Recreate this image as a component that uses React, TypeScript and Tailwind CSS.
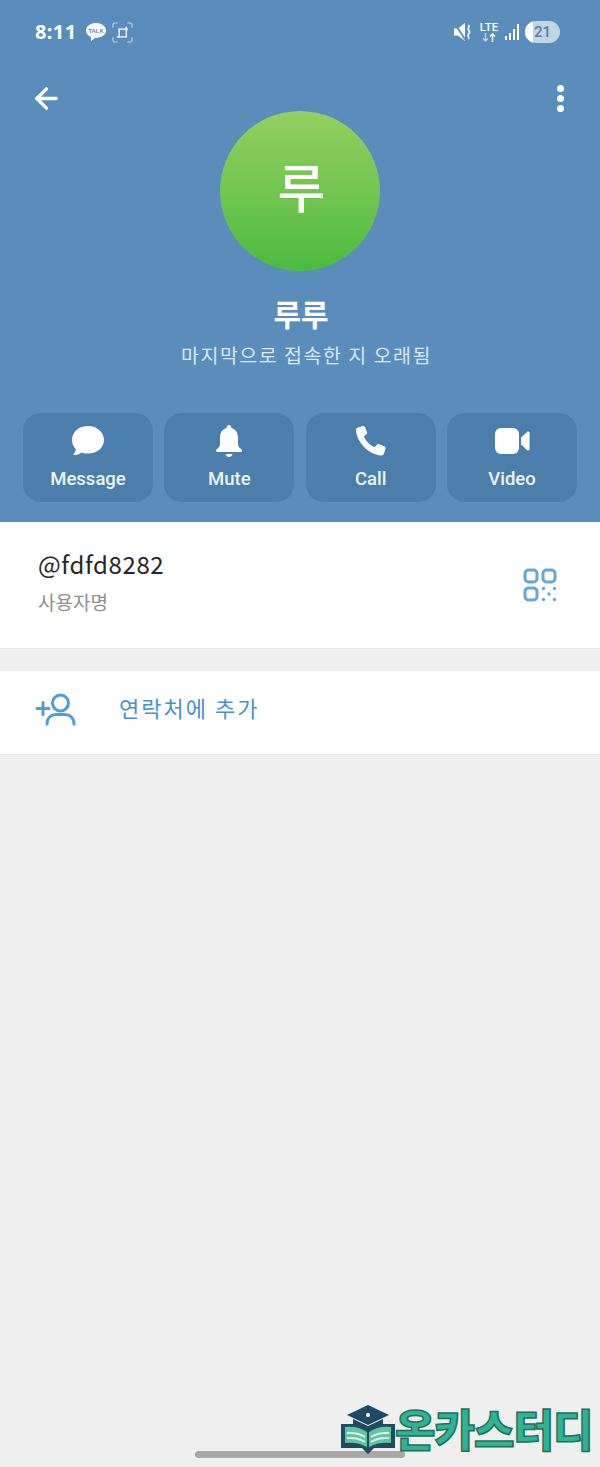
import { ArrowLeft } from 'lucide-react';
import type { ReactNode } from 'react';

const korean = 'font-["Noto_Sans_CJK_KR","Noto_Sans",sans-serif]';

function ActionButton({ label, icon }: { label: string; icon: ReactNode }) {
  return (
    <div className="w-[130px] h-[89px] rounded-[18px] bg-[#4b7eab] flex flex-col items-center pt-[10px]">
      <div className="w-9 h-9 flex items-center justify-center">{icon}</div>
      <span className='mt-[9px] text-[18.500px] leading-[22px] font-medium text-[#eef3f8] font-["Roboto",sans-serif]'>{label}</span>
    </div>
  );
}

function StatusBar() {
  return (
    <div className="h-[85px] pt-[20px] pl-[35px] pr-[40px] flex items-start justify-between text-white">
      <div className="flex items-center h-[24px]">
        <span className='w-[41px] text-[20px] leading-[24px] font-bold tracking-[0.4px] whitespace-nowrap font-["Noto_Sans",sans-serif]'>8:11</span>
        <svg width="22" height="20" viewBox="0 0 22 20" className="ml-[9px]">
          <path d="M11 1C5.500 1 1 4.300 1 8.500c0 2.800 2 5.100 4.800 6.400L6 19l4-3.100h1c5.500 0 10-3.300 10-7.400S16.500 1 11 1z" fill="#fff" />
          <text x="11" y="11" textAnchor="middle" fontSize="6" fontWeight="700" fill="#5a8dbb" fontFamily="Liberation Sans">TALK</text>
        </svg>
        <svg width="21" height="21" viewBox="0 0 22 22" fill="none" stroke="#fff" className="ml-[5px]">
          <path d="M1 6V3a2 2 0 0 1 2-2h3M16 1h3a2 2 0 0 1 2 2v3M21 16v3a2 2 0 0 1-2 2h-3M6 21H3a2 2 0 0 1-2-2v-3" strokeOpacity=".6" strokeWidth="1.200" />
          <path d="M6.500 7.500h10M15 5v10.500M7.500 7v9.500M5 15.500h10.500" strokeWidth="1.400" />
        </svg>
      </div>
      <div className="flex items-center h-[24px]">
        <svg width="18" height="20" viewBox="0 0 18 20" fill="#fff">
          <path d="M0 6.500h4l7-5.500v18l-7-5.500H0z" />
          <path d="M0.500 1 11.500 18" stroke="#5a8dbb" strokeWidth="1.800" />
          <path d="M14.500 3c2 2-1.500 3 0 5s2 2 0 4 1.500 3 0 5" stroke="#fff" strokeWidth="1.600" fill="none" />
        </svg>
        <div className='ml-[8px] w-[18px] flex flex-col items-center leading-none font-["Roboto",sans-serif]'>
          <span className="text-[11.500px] leading-[11px] font-medium">LTE</span>
          <svg width="14" height="9" viewBox="0 0 14 9" fill="none" strokeWidth="1.400">
            <path d="M3.500 0v8M1 5.500 3.500 8 6 5.500" stroke="#c3d4e5" />
            <path d="M10.500 9V1M8 3.500 10.500 1 13 3.500" stroke="#fff" />
          </svg>
        </div>
        <div className="ml-[7px] h-[16px] flex items-end gap-[2px]">
          <div className="w-[2px] h-[4px] bg-white" />
          <div className="w-[2px] h-[7px] bg-white" />
          <div className="w-[2px] h-[11px] bg-white" />
          <div className="w-[2px] h-[16px] bg-white" />
        </div>
        <div className="ml-[6px] w-[35px] h-[22px] rounded-full bg-[#c3d4e5] flex items-center overflow-hidden relative">
          <div className="w-[8px] h-full bg-white" />
          <span className='absolute inset-0 text-center text-[15px] leading-[22px] font-medium text-[#4f7fae] font-["Roboto",sans-serif]'>21</span>
        </div>
      </div>
    </div>
  );
}

export default function App() {
  return (
    <div className="relative w-[600px] h-[1467px] overflow-hidden bg-[#efefef]">
      {/* Profile header */}
      <div className="h-[522px] bg-[#5a8dbb]">
        <StatusBar />
        <div className="h-[26px] pl-[30px] pr-[36px] flex items-center justify-between text-white">
          <ArrowLeft size={33} strokeWidth={2.400} />
          <div className="flex flex-col gap-[3px]">
            <div className="w-[7px] h-[7px] rounded-full bg-white" />
            <div className="w-[7px] h-[7px] rounded-full bg-white" />
            <div className="w-[7px] h-[7px] rounded-full bg-white" />
          </div>
        </div>
        <div className="flex flex-col items-center">
          <div className="w-[160px] h-[160px] rounded-full bg-gradient-to-b from-[#93d060] to-[#4bbb40] flex items-center justify-center">
            <span className={`${korean} text-[52px] leading-none font-medium text-white -mt-[10px] ml-[3px]`}>루</span>
          </div>
          <div className={`${korean} mt-[23px] ml-[2px] text-[30px] leading-[38px] font-bold text-white`}>루루</div>
          <div className={`${korean} mt-[9px] ml-[13px] text-[19.500px] leading-[28px] tracking-[1.500px] text-[#d9e8f5]`}>마지막으로 접속한 지 오래됨</div>
        </div>
        <div className="mt-[44px] px-[23px] flex justify-between">
          <ActionButton
            label="Message"
            icon={
              <svg width="34" height="32" viewBox="0 0 34 32" fill="#fff">
                <path d="M17 1C8 1 1 7 1 15c0 3.600 1.400 6.800 3.800 9.200-.3 2.200-1.300 4-2.800 5.800 3.200.2 6.400-.9 8.600-2.600 2 .8 4.200 1.200 6.400 1.200 9 0 16-6 16-13.600S26 1 17 1z" />
              </svg>
            }
          />
          <ActionButton
            label="Mute"
            icon={
              <svg width="30" height="34" viewBox="0 0 30 34" fill="#fff">
                <path d="M15 1c-1.300 0-2.300 1-2.300 2.300v.8C8 5.300 6 9.200 6 14v6c0 2.500-1.500 4-3.500 5.500C1.500 26.300 2 28 3.400 28h23.200c1.400 0 1.900-1.700.9-2.500C25.500 24 24 22.500 24 20v-6c0-4.800-2-8.700-6.700-9.900v-.8C17.300 2 16.300 1 15 1z" />
                <path d="M11.500 30h7c-.5 1.800-1.900 3-3.500 3s-3-1.200-3.500-3z" />
              </svg>
            }
          />
          <ActionButton
            label="Call"
            icon={
              <svg width="32" height="32" viewBox="0 0 32 32" fill="#fff">
                <path d="M3 2.500 7.500 1c1-.3 2 .1 2.400 1.100l2 5c.3.8.1 1.600-.5 2.200L9 11.500c1.700 4.500 5.800 8.600 10.500 10.700l2.300-2.500c.6-.6 1.400-.8 2.200-.5l5.300 2c1 .4 1.500 1.400 1.200 2.400l-1.500 5c-.4 1.200-1.500 2-2.800 1.900C13 29.500 1.500 16.500 1 5.300.9 4 1.800 2.900 3 2.500z" />
              </svg>
            }
          />
          <ActionButton
            label="Video"
            icon={
              <svg width="36" height="28" viewBox="0 0 36 28" fill="#fff">
                <rect x="1" y="1" width="24" height="26" rx="6" />
                <path d="M27 10.500 33 5c1-.9 2.500-.3 2.500 1v16c0 1.300-1.500 1.900-2.500 1l-6-5.500z" />
              </svg>
            }
          />
        </div>
      </div>

      {/* Username */}
      <div className="h-[127px] bg-white border-b border-[#e6e6e6] pl-[38px] pr-[43px] flex items-center justify-between">
        <div className="-mt-[6px]">
          <div className={`${korean} -mt-[2px] text-[24px] leading-[32px] tracking-[0.6px] text-[#262626]`}>@fdfd8282</div>
          <div className={`${korean} mt-[10px] text-[19px] leading-[24px] text-[#8f8f8f]`}>사용자명</div>
        </div>
        <svg width="34" height="34" viewBox="0 0 34 34" fill="none" stroke="#66a9d2" strokeWidth="3">
          <rect x="2" y="2" width="12" height="12" rx="3.500" />
          <rect x="20" y="2" width="12" height="12" rx="3.500" />
          <rect x="2" y="20" width="12" height="12" rx="3.500" />
          <g fill="#66a9d2" stroke="none">
            <circle cx="20.500" cy="20.500" r="1.700" />
            <circle cx="31.500" cy="20.500" r="1.700" />
            <circle cx="26" cy="26" r="1.700" />
            <circle cx="20.500" cy="31.500" r="1.700" />
            <circle cx="31.500" cy="31.500" r="1.700" />
          </g>
        </svg>
      </div>

      {/* Add contact */}
      <div className="mt-[22px] h-[84px] bg-white border-b border-[#e6e6e6] pl-[35px] flex items-center">
        <svg width="42" height="34" viewBox="0 0 42 34" fill="none" stroke="#4f9fd0" strokeWidth="3" strokeLinecap="round" className="-mt-[6px]">
          <path d="M2 15.500h12M8 9.500v12" />
          <circle cx="25.500" cy="10" r="8" />
          <path d="M12 31c0-6 4-9.500 9-9.500h9c5 0 9 3.500 9 9.500" />
        </svg>
        <span className={`${korean} ml-[42px] -mt-[11px] text-[22px] leading-[28px] tracking-[2px] text-[#4a92c4]`}>연락처에 추가</span>
      </div>

      {/* Home indicator */}
      <div className="absolute left-[195px] top-[1451px] w-[210px] h-[7px] rounded-full bg-[#a8a8a8]" />

      {/* Watermark */}
      <div className="absolute left-[340px] top-[1404px] flex items-center">
        <svg width="56" height="52" viewBox="0 0 56 52">
          <path d="M1 20h22l5 4 5-4h22v24H34l-6 6-6-6H1z" fill="#1f4a62" />
          <path d="M5 23c8-1 15 0 22 5v15c-7-4-14-5-22-4zM51 23c-8-1-15 0-22 5v15c7-4 14-5 22-4z" fill="#5fc4a2" />
          <path d="M7 29c7-.5 13 .5 18 4M7 34c7-.5 13 .5 18 4M49 29c-7-.5-13 .5-18 4M49 34c-7-.5-13 .5-18 4" stroke="#dff3ea" strokeWidth="2" fill="none" />
          <path d="M28 1 49 11 28 21 7 11z" fill="#1f4a62" />
          <path d="M13 15v6c8 5 22 5 30 0v-6L28 22z" fill="#1f4a62" />
          <circle cx="28" cy="11" r="2" fill="#fff" />
        </svg>
        <span className={`${korean} ml-[-1px] mt-[-5px] text-[44px] leading-[46px] font-black tracking-[-1px] text-[#2fb394] [-webkit-text-stroke:1.500px_#1f6f60] whitespace-nowrap`}>온카스터디</span>
      </div>
    </div>
  );
}
